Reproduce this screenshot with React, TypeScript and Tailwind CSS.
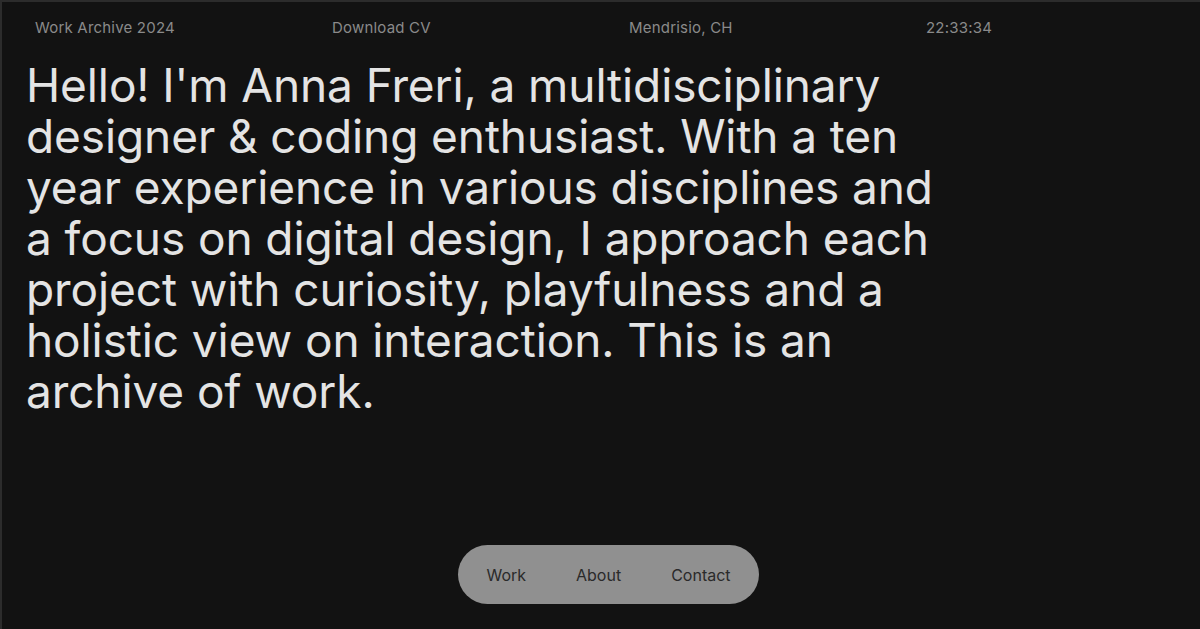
import React from 'react';

const headerItems = ['Work Archive 2024', 'Download CV', 'Mendrisio, CH', '22:33:34'];
const navItems = ['Work', 'About', 'Contact'];

const App: React.FC = () => {
    return (
        <div className="h-screen w-full bg-[#121212] border-t-2 border-l-2 border-[#2c2c2c] flex flex-col overflow-hidden" style={{ fontFamily: 'Inter, "Noto Sans", sans-serif' }}>
            {/* top bar */}
            <div className="flex pl-[33px] pt-[17px]">
                {headerItems.map(item => (
                    <div key={item} className="w-[297px] shrink-0 text-[15px] leading-[18px] tracking-[0.2px] text-[#8a8a8a]">{item}</div>
                ))}
            </div>

            {/* intro */}
            <p className="mt-[23px] ml-[24px] w-[920px] text-[46px] leading-[51px] text-[#e4e4e4] tracking-[-0.1px]">
                Hello! I'm Anna Freri, a multidisciplinary designer &amp; coding enthusiast. With a ten year experience in various disciplines and a focus on digital design, I approach each project with curiosity, playfulness and a holistic view on interaction. This is an archive of work.
            </p>

            {/* nav pill */}
            <div className="mt-auto mb-[25px] flex justify-center pl-[15px]">
                <nav className="flex items-center gap-[50px] h-[59px] px-[28px] rounded-full bg-[#909090]">
                    {navItems.map(item => (
                        <span key={item} className="text-[16px] text-[#2a2a2a]">{item}</span>
                    ))}
                </nav>
            </div>
        </div>
    );
};

export default App;
